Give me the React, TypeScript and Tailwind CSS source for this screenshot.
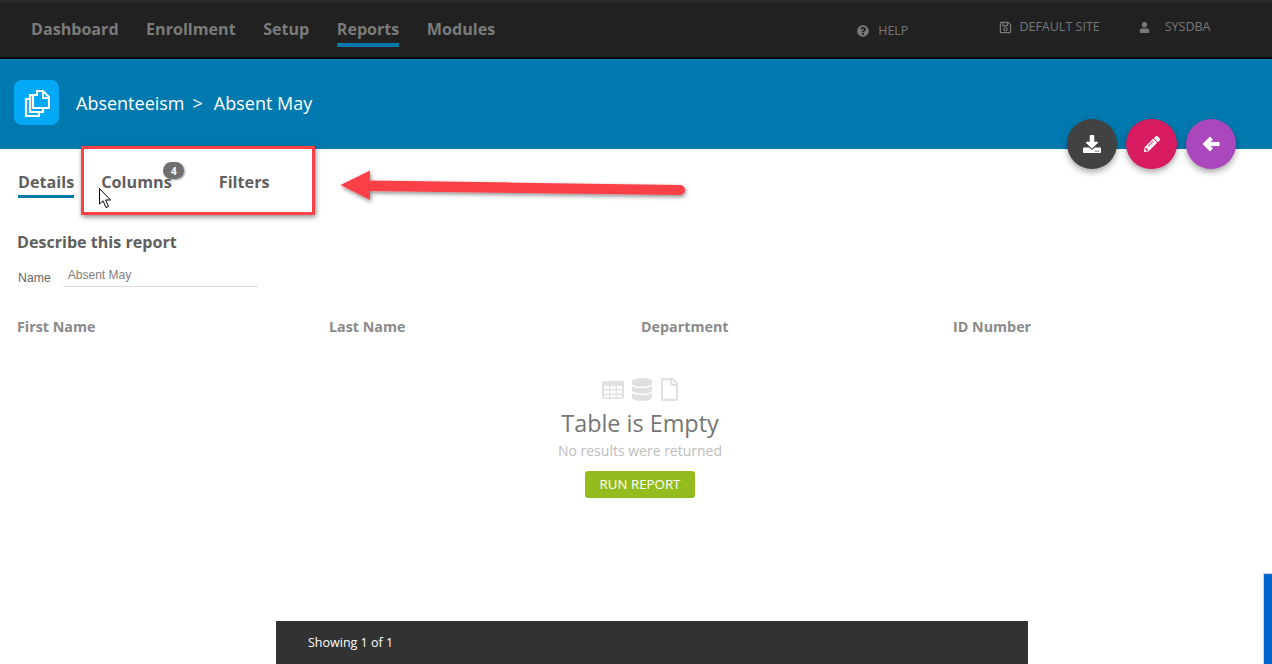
import React from "react";
import {
  FaDatabase,
  FaDownload,
  FaPencilAlt,
  FaQuestionCircle,
  FaRegFile,
  FaRegSave,
  FaUser,
} from "react-icons/fa";

const NAV_ITEMS = ["Dashboard", "Enrollment", "Setup", "Reports", "Modules"];
const TABLE_COLUMNS = ["First Name", "Last Name", "Department", "ID Number"];

const TopNav: React.FC = () => (
  <header className="flex h-[59px] shrink-0 items-start border-b-2 border-t-2 border-b-black border-t-[#2a2a2a] bg-[#212121]">
    <nav className="ml-[31px] mt-[17px] flex gap-[27.5px]">
      {NAV_ITEMS.map((item) => (
        <div key={item} className="flex flex-col">
          <span className="text-[16.1px] font-bold leading-[20px] text-[#7b7b7b]">
            {item}
          </span>
          {item === "Reports" && <span className="mt-[4px] h-[4px] bg-[#0079af]" />}
        </div>
      ))}
    </nav>
    <div className="ml-[362px] mt-[20px] flex items-center text-[12.5px] leading-[16px] text-[#787878]">
      <FaQuestionCircle className="size-[12px]" />
      <span className="ml-[9px] mt-[1px]">HELP</span>
    </div>
    <div className="ml-[91px] mt-[17px] flex items-center text-[12.5px] leading-[16px] text-[#787878]">
      <FaRegSave className="size-[13px]" />
      <span className="ml-[7px]">DEFAULT SITE</span>
    </div>
    <div className="ml-[39px] mt-[17px] flex items-center text-[12.5px] leading-[16px] text-[#787878]">
      <FaUser className="size-[11px]" />
      <span className="ml-[15px]">SYSDBA</span>
    </div>
  </header>
);

const FilesLogo: React.FC = () => (
  <svg viewBox="0 0 26 28" className="h-[28px] w-[26px]" fill="none" stroke="#fff" strokeWidth="2.2">
    <path d="M13 3h6l6 6v11H9V7h4z" fill="#03a9f4" transform="translate(0 -1)" />
    <path d="M19 2v7h6" strokeWidth="1.8" />
    <path d="M9 6H6v17h13v-3" />
    <path d="M6 10H2v17h13v-4" />
  </svg>
);

const TableGlyph: React.FC = () => (
  <svg viewBox="0 0 22 18" className="h-[18px] w-[22px]">
    <rect width="22" height="18" rx="2" fill="#e0e0e0" />
    <g fill="#fff">
      <rect x="2" y="5" width="5" height="3" />
      <rect x="8.5" y="5" width="5" height="3" />
      <rect x="15" y="5" width="5" height="3" />
      <rect x="2" y="9.5" width="5" height="3" />
      <rect x="8.5" y="9.5" width="5" height="3" />
      <rect x="15" y="9.5" width="5" height="3" />
      <rect x="2" y="14" width="5" height="2.5" />
      <rect x="8.5" y="14" width="5" height="2.5" />
      <rect x="15" y="14" width="5" height="2.5" />
    </g>
  </svg>
);

const BackArrow: React.FC = () => (
  <svg viewBox="0 0 18 16" className="h-[16px] w-[18px]" fill="none" stroke="#fff" strokeWidth="4.2">
    <path d="M9.5 2 L3.5 8 L9.5 14" />
    <path d="M4 8 H17.5" />
  </svg>
);

const Hero: React.FC = () => (
  <section className="flex h-[90px] shrink-0 items-center bg-[#0079af] pb-[3px] pl-[14px]">
    <div className="flex size-[45px] items-center justify-center rounded-[8px] bg-[#03a9f4]">
      <FilesLogo />
    </div>
    <div className="ml-[17px] text-[18px] leading-[24px] text-white">
      <span>Absenteeism</span>
      <span className="ml-[8px]">&gt;</span>
      <span className="ml-[11px]">Absent May</span>
    </div>
  </section>
);

const FabButtons: React.FC = () => (
  <div className="absolute left-[1067px] top-[119px] flex gap-[9px]">
    <button className="flex size-[50px] items-center justify-center rounded-full bg-[#424242] text-white shadow-[0_3px_6px_rgba(0,0,0,0.35)]">
      <FaDownload className="size-[18px]" />
    </button>
    <button className="flex h-[50px] w-[51px] items-center justify-center rounded-full bg-[#d81b60] text-white shadow-[0_3px_6px_rgba(0,0,0,0.35)]">
      <FaPencilAlt className="size-[16px]" />
    </button>
    <button className="flex size-[50px] items-center justify-center rounded-full bg-[#ab47bc] text-white shadow-[0_3px_6px_rgba(0,0,0,0.35)]">
      <BackArrow />
    </button>
  </div>
);

const Annotations: React.FC = () => (
  <>
    <div className="absolute left-[81px] top-[146px] h-[69px] w-[234px] border-[3px] border-[#fb4046] shadow-[1px_2px_5px_rgba(0,0,0,0.45)]" />
    <svg className="absolute left-[330px] top-[160px]" width="370" height="50" viewBox="0 0 370 50">
      <defs>
        <filter id="arrowShadow" x="-5%" y="-30%" width="110%" height="180%">
          <feDropShadow dx="1" dy="2" stdDeviation="2" floodColor="#000" floodOpacity="0.45" />
        </filter>
      </defs>
      <path
        d="M10.5 25 L40 10.5 L40 20.5 L350 25 A4.5 4.5 0 0 1 350 35 L40 31 L40 40 Z"
        fill="#fb4046"
        filter="url(#arrowShadow)"
      />
    </svg>
    <svg className="absolute left-[99px] top-[188px]" width="13" height="21" viewBox="0 0 13 21">
      <path d="M0.5 0.5 L0.5 16 L4 12.8 L7 19.5 L9.5 18.4 L6.6 12 L11.5 12 Z" fill="#fff" stroke="#000" strokeWidth="1" />
    </svg>
  </>
);

const Tabs: React.FC = () => (
  <div className="ml-[18px] mt-[23px] flex h-[25px] items-start text-[16.2px] font-bold leading-[20px] text-[#5f5f5f]">
    <div className="flex flex-col">
      <span>Details</span>
      <span className="mt-[3px] h-[3px] bg-[#0079af]" />
    </div>
    <div className="relative ml-[27px]">
      <span>Columns</span>
      <span className="absolute left-[62px] top-[-10px] flex h-[17px] w-[21px] items-center justify-center rounded-full bg-[#6f6f6f] text-[10px] font-bold leading-none text-white shadow-[1px_1px_2px_rgba(0,0,0,0.4)]">
        4
      </span>
    </div>
    <span className="ml-[47px]">Filters</span>
  </div>
);

const EmptyState: React.FC = () => (
  <div className="mt-[41px] flex flex-col items-center pl-[8px]">
    <div className="flex items-center gap-[8px] text-[#e0e0e0]">
      <TableGlyph />
      <FaDatabase className="h-[23px] w-[20px]" />
      <FaRegFile className="h-[23px] w-[19px]" />
    </div>
    <div className="mt-[6px] text-[23.4px] leading-[32px] text-[#757575]">Table is Empty</div>
    <div className="mt-[2px] text-[14px] leading-[20px] text-[#bdbdbd]">No results were returned</div>
    <button className="mt-[10px] flex h-[27px] w-[110px] items-center justify-center rounded-[3px] bg-[#95bc1f] text-[13.3px] text-white">
      RUN REPORT
    </button>
  </div>
);

export default function App() {
  return (
    <div className="relative flex h-[664px] w-[1272px] flex-col overflow-hidden bg-white font-['Open_Sans',sans-serif]">
      <TopNav />
      <Hero />
      <main className="flex min-h-0 flex-1 flex-col">
        <Tabs />
        <h2 className="ml-[17px] mt-[34px] text-[16.1px] font-bold leading-[22px] text-[#5f5f5f]">
          Describe this report
        </h2>
        <div className="ml-[18px] mt-[11px] flex items-start font-['Liberation_Sans',sans-serif] text-[#666]">
          <span className="mt-[6px] text-[12.3px] leading-[16px]">Name</span>
          <div className="ml-[12px] h-[23px] w-[195px] border-b border-[#dcdcdc] pl-[5px] pt-[3px] text-[12px] leading-[16px] text-[#808080]">
            Absent May
          </div>
        </div>
        <div className="ml-[17px] mt-[30px] grid w-[1248px] grid-cols-4 text-[14.3px] font-bold leading-[20px] text-[#8a8a8a]">
          {TABLE_COLUMNS.map((col) => (
            <span key={col}>{col}</span>
          ))}
        </div>
        <EmptyState />
        <footer className="ml-[276px] mt-auto flex h-[43px] w-[752px] shrink-0 items-center bg-[#323232] pl-[32px] pt-[1px] text-[12.5px] text-white">
          Showing 1 of 1
        </footer>
      </main>
      <FabButtons />
      <Annotations />
      <div className="absolute bottom-0 right-0 h-[91px] w-[9px] border-l border-t border-[#cfd8e3] bg-[#0066cc]" />
    </div>
  );
}
